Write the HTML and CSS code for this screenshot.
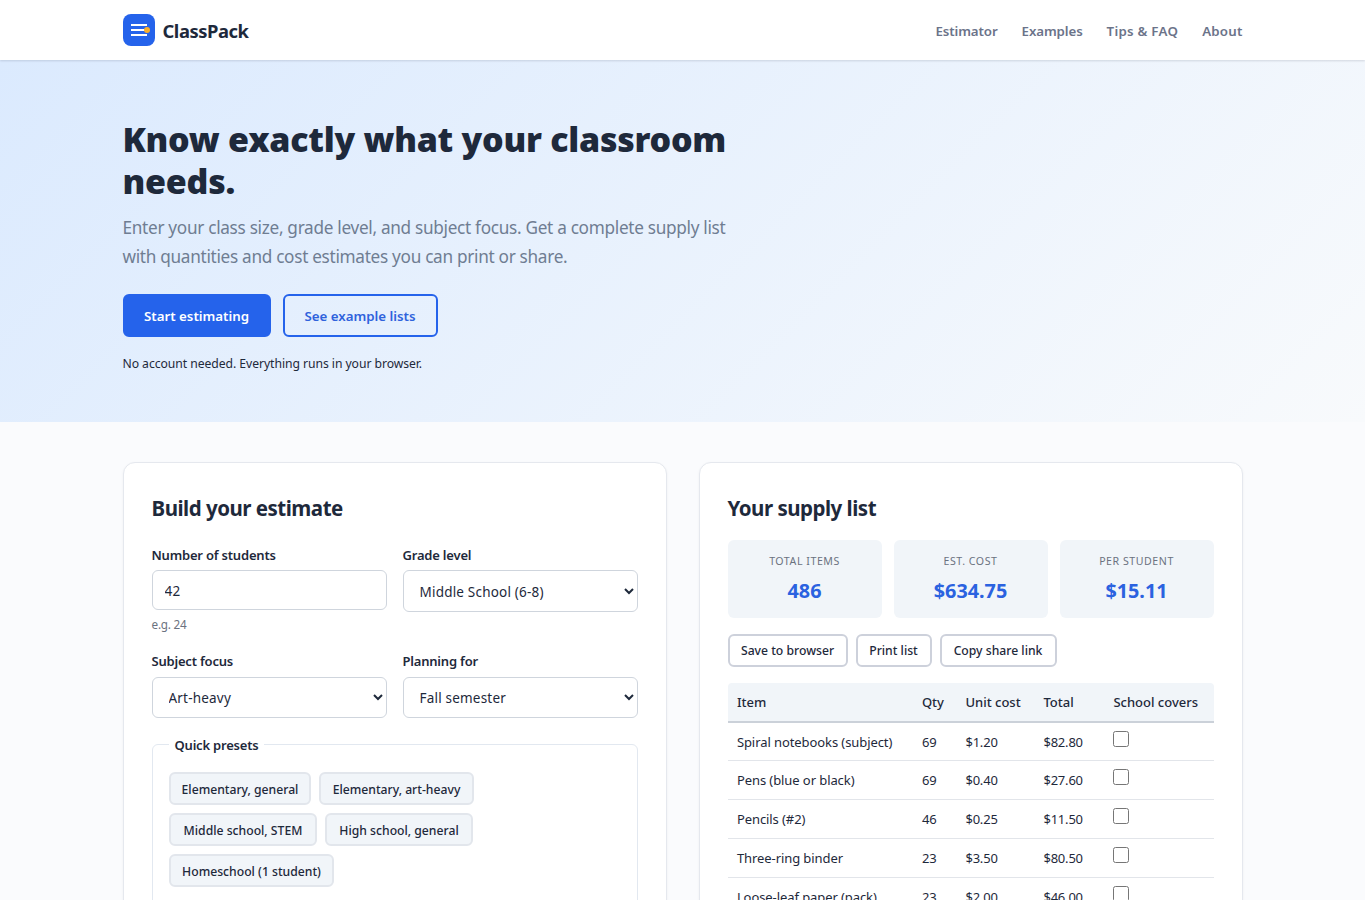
FILE: index.html
```html
<!DOCTYPE html>
<html lang="en">
<head>
    <meta charset="UTF-8">
    <meta name="viewport" content="width=device-width, initial-scale=1.0">
    <title>ClassPack - Classroom Supply Estimator</title>
    <link rel="stylesheet" href="styles.css">
</head>
<body>

    <header class="site-header">
        <div class="container header-inner">
            <a class="logo" href="#">
                <svg width="32" height="32" viewBox="0 0 32 32" aria-hidden="true">
                    <rect width="32" height="32" rx="8" fill="#2563eb"/>
                    <path d="M8 11h16M8 16h14M8 21h16" stroke="#fff" stroke-width="2"/>
                    <circle cx="24" cy="16" r="3" fill="#fbb02d"/>
                </svg>
                <span>ClassPack</span>
            </a>
            <nav class="nav">
                <a href="#estimator">Estimator</a>
                <a href="#examples">Examples</a>
                <a class="nav-tips" href="#faq">Tips &amp; FAQ</a>
                <a class="nav-about" href="#about">About</a>
            </nav>
        </div>
    </header>

    <section class="hero">
        <div class="container">
            <div class="hero-text">
                <h1>Know exactly what your classroom<br>needs.</h1>
                <p class="lead">Enter your class size, grade level, and subject focus. Get a complete supply list<br>with quantities and cost estimates you can print or share.</p>
                <div class="hero-actions">
                    <a class="btn btn-primary" href="#estimator">Start estimating</a>
                    <a class="btn btn-outline" href="#examples">See example lists</a>
                </div>
                <p class="note">No account needed. Everything runs in your browser.</p>
            </div>
        </div>
    </section>

    <main class="container estimator" id="estimator">
        <section class="card">
            <h2>Build your estimate</h2>
            <form class="form">
                <div class="form-grid">
                    <div class="field">
                        <label for="students">Number of students</label>
                        <input type="text" id="students" value="42">
                        <small>e.g. 24</small>
                    </div>
                    <div class="field">
                        <label for="grade">Grade level</label>
                        <select id="grade" class="tall"><option>Middle School (6-8)</option></select>
                    </div>
                    <div class="field field-low">
                        <label for="subject">Subject focus</label>
                        <select id="subject"><option>Art-heavy</option></select>
                    </div>
                    <div class="field field-low">
                        <label for="period">Planning for</label>
                        <select id="period"><option>Fall semester</option></select>
                    </div>
                </div>
                <fieldset>
                    <legend>Quick presets</legend>
                    <div class="presets">
                        <button type="button" class="preset w-142">Elementary, general</button>
                        <button type="button" class="preset w-155">Elementary, art-heavy</button>
                        <button type="button" class="preset w-148">Middle school, STEM</button>
                        <button type="button" class="preset w-148">High school, general</button>
                        <button type="button" class="preset w-165">Homeschool (1 student)</button>
                    </div>
                </fieldset>
            </form>
        </section>

        <section class="card">
            <h2>Your supply list</h2>
            <div class="stats">
                <div class="stat"><span class="stat-label">Total items</span><strong>486</strong></div>
                <div class="stat"><span class="stat-label">Est. cost</span><strong>$634.75</strong></div>
                <div class="stat"><span class="stat-label">Per student</span><strong>$15.11</strong></div>
            </div>
            <div class="actions">
                <button type="button" class="w-120">Save to browser</button>
                <button type="button" class="w-76">Print list</button>
                <button type="button" class="w-117">Copy share link</button>
            </div>
            <table>
                <thead>
                    <tr>
                        <th class="col-item">Item</th>
                        <th class="col-qty">Qty</th>
                        <th class="col-unit">Unit cost</th>
                        <th class="col-total">Total</th>
                        <th>School covers</th>
                    </tr>
                </thead>
                <tbody>
                    <tr><td>Spiral notebooks (subject)</td><td>69</td><td>$1.20</td><td>$82.80</td><td><input type="checkbox"></td></tr>
                    <tr><td>Pens (blue or black)</td><td>69</td><td>$0.40</td><td>$27.60</td><td><input type="checkbox"></td></tr>
                    <tr><td>Pencils (#2)</td><td>46</td><td>$0.25</td><td>$11.50</td><td><input type="checkbox"></td></tr>
                    <tr><td>Three-ring binder</td><td>23</td><td>$3.50</td><td>$80.50</td><td><input type="checkbox"></td></tr>
                    <tr><td>Loose-leaf paper (pack)</td><td>23</td><td>$2.00</td><td>$46.00</td><td><input type="checkbox"></td></tr>
                </tbody>
            </table>
        </section>
    </main>

</body>
</html>
```
FILE: styles.css
```css
* {
    box-sizing: border-box;
}
body {
    margin: 0;
    height: 900px;
    overflow: hidden;
    font-family: "Segoe UI", "Noto Sans", sans-serif;
    font-size: 13px;
    color: #1e293b;
    background-color: #fafbfd;
}
a {
    text-decoration: none;
}
h1, h2, p {
    margin: 0;
}
button, input, select {
    font-family: inherit;
    color: inherit;
}
.container {
    max-width: 1120px;
    margin: 0 auto;
}

/* Header */
.site-header {
    position: relative;
    background-color: #fff;
    box-shadow: 0 1px 2px rgba(15, 23, 42, 0.14);
}
.header-inner {
    display: flex;
    justify-content: space-between;
    align-items: center;
    height: 60px;
}
.logo {
    display: flex;
    align-items: center;
    gap: 8px;
    font-size: 18.4px;
    font-weight: 700;
    letter-spacing: -0.45px;
    color: #1e293b;
}
.logo svg {
    display: block;
}
.nav {
    display: flex;
    gap: 24px;
    font-size: 13.3px;
    font-weight: 600;
    letter-spacing: -0.1px;
    padding-top: 2px;
}
.nav a {
    color: #6b7389;
    white-space: nowrap;
}
.nav .nav-tips {
    letter-spacing: 0.25px;
}
.nav .nav-about {
    letter-spacing: 0.2px;
}

/* Hero */
.hero {
    height: 362px;
    padding-top: 58px;
    background: linear-gradient(135deg, #dbeafe 0%, #f8fafc 100%);
}
h1 {
    font-size: 34px;
    font-weight: 900;
    line-height: 42px;
    letter-spacing: -0.26px;
    white-space: nowrap;
}
.lead {
    margin-top: 11px;
    font-size: 17.2px;
    line-height: 29px;
    color: #6f7d92;
    letter-spacing: -0.3px;
    white-space: nowrap;
}
.hero-actions {
    display: flex;
    gap: 12px;
    margin-top: 23px;
}
.btn {
    display: flex;
    align-items: center;
    justify-content: center;
    height: 43px;
    border: 2px solid #2563eb;
    border-radius: 6px;
    font-size: 13.3px;
    font-weight: 600;
}
.btn-primary {
    width: 148px;
    background-color: #2563eb;
    color: #fff;
}
.btn-outline {
    width: 155px;
    color: #2f62dc;
}
.note {
    margin-top: 17px;
    font-size: 12.2px;
    line-height: 20px;
    letter-spacing: -0.06px;
}

/* Estimator */
.estimator {
    display: grid;
    grid-template-columns: 1fr 1fr;
    gap: 32px;
    padding-top: 40px;
}
.card {
    height: 620px;
    padding: 28px;
    background-color: #fff;
    border: 1px solid #e5e8ee;
    border-radius: 12px;
    box-shadow: 0 1px 3px rgba(15, 23, 42, 0.05);
}
h2 {
    font-size: 20.5px;
    line-height: 35px;
    letter-spacing: -0.5px;
}
.form-grid {
    display: grid;
    grid-template-columns: 1fr 1fr;
    grid-template-rows: 106px 68px;
    column-gap: 16px;
    margin-top: 18px;
}
.field {
    display: flex;
    flex-direction: column;
}
label {
    margin-bottom: 4px;
    font-weight: 600;
    line-height: 22px;
    letter-spacing: -0.2px;
}
.field-low label {
    margin-bottom: 5px;
}
.field input, select {
    width: 100%;
    height: 40px;
    padding: 0 12px;
    border: 1px solid #cfd5dd;
    border-radius: 6px;
    background-color: #fff;
    font-size: 13.5px;
    letter-spacing: 0.2px;
}
.field input {
    padding-top: 2px;
}
.field select {
    height: 41px;
    flex: none;
    padding-top: 1px;
}
.field select.tall {
    height: 42px;
    padding-top: 2px;
}
small {
    margin-top: 4px;
    font-size: 11.7px;
    line-height: 20px;
    letter-spacing: -0.2px;
    color: #6b7280;
}
fieldset {
    margin: 16px 0 0;
    padding: 18px 16px;
    height: 220px;
    border: 1px solid #e2e8f0;
    border-radius: 6px;
}
legend {
    height: 20px;
    padding: 0 6px;
    font-weight: 600;
    line-height: 22px;
    letter-spacing: -0.2px;
}
.presets {
    display: flex;
    flex-wrap: wrap;
    gap: 8px;
    max-width: 330px;
}
.preset, .actions button {
    height: 33px;
    padding: 0;
    border: 2px solid #e2e6ec;
    border-radius: 6px;
    background-color: #f1f5f9;
    font-size: 12.2px;
    font-weight: 500;
    white-space: nowrap;
}
.preset {
    padding: 1px 0 0 1px;
}
.w-142 { width: 142px; }
.w-155 { width: 155px; }
.w-148 { width: 148px; }
.w-165 { width: 165px; }
.w-120 { width: 120px; }
.w-76 { width: 76px; }
.w-117 { width: 117px; }

/* Results */
.stats {
    display: grid;
    grid-template-columns: repeat(3, 1fr);
    gap: 12px;
    margin-top: 14px;
}
.stat {
    display: flex;
    flex-direction: column;
    align-items: center;
    height: 78px;
    padding-top: 11px;
    border-radius: 6px;
    background-color: #f1f5f9;
}
.stat-label {
    font-size: 10.6px;
    line-height: 20px;
    letter-spacing: 0.55px;
    text-transform: uppercase;
    color: #6b7280;
}
.stat strong {
    font-size: 19.8px;
    line-height: 40px;
    color: #2b62e0;
}
.actions {
    display: flex;
    gap: 8px;
    margin-top: 16px;
}
.actions button {
    border-color: #cdd1db;
    background-color: #fff;
}
table {
    width: 100%;
    margin-top: 16px;
    border-collapse: separate;
    border-spacing: 0;
    table-layout: fixed;
}
th, td {
    padding: 0 0 0 9.4px;
    text-align: left;
    white-space: nowrap;
}
th {
    height: 40px;
    background-color: #f1f5f9;
    border-bottom: 2px solid #cbd1d9;
    font-weight: 500;
}
th:first-child {
    border-top-left-radius: 4px;
}
th:last-child {
    border-top-right-radius: 4px;
}
td {
    height: 39px;
    border-bottom: 1px solid #e2e5ea;
    letter-spacing: -0.2px;
}
td:first-child {
    letter-spacing: -0.08px;
}
tbody tr:first-child td {
    height: 38px;
}
.col-item { width: 185px; }
.col-qty { width: 43.5px; }
.col-unit { width: 78px; }
.col-total { width: 70px; }
td input {
    display: block;
    width: 16px;
    height: 16px;
    margin: 0 0 6px;
}
```
